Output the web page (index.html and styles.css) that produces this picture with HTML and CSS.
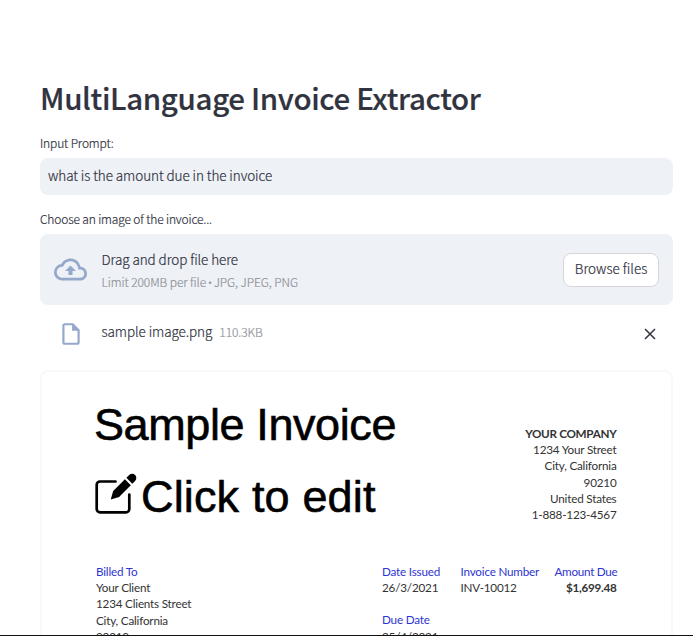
FILE: index.html
```html
<!DOCTYPE html>
<html lang="en">
<head>
<meta charset="utf-8">
<title>MultiLanguage Invoice Extractor</title>
<link rel="stylesheet" href="styles.css">
</head>
<body>
<main class="app">
  <h1 class="title"><span>MultiLanguage Invoice Extractor</span></h1>
  <label class="label label-prompt"><span>Input Prompt:</span></label>
  <div class="input"><span>what is the amount due in the invoice</span></div>
  <label class="label label-file"><span>Choose an image of the invoice...</span></label>
  <section class="dropzone">
    <svg class="cloud" viewBox="0 0 24 24"><path d="M19.35 10.04A7.49 7.49 0 0 0 12 4C9.11 4 6.6 5.64 5.35 8.04A5.994 5.994 0 0 0 0 14c0 3.31 2.69 6 6 6h13c2.76 0 5-2.24 5-5 0-2.64-2.05-4.78-4.65-4.96zM19 18H6c-2.21 0-4-1.79-4-4 0-2.05 1.53-3.76 3.56-3.97l1.07-.11.5-.95A5.469 5.469 0 0 1 12 6c2.62 0 4.88 1.86 5.39 4.43l.3 1.5 1.53.11A2.98 2.98 0 0 1 22 15c0 1.65-1.35 3-3 3zM8 13h2.55v3h2.9v-3H16l-4-4z"/></svg>
    <div class="hint">
      <span class="drag">Drag and drop file here</span>
      <span class="limit">Limit 200MB per file <span class="dot">•</span> JPG, JPEG, PNG</span>
    </div>
    <button class="browse"><span>Browse files</span></button>
  </section>
  <div class="file">
    <svg class="doc" viewBox="0 0 24 24"><path d="M14 2H6c-1.1 0-1.99.9-1.99 2L4 20c0 1.1.89 2 1.99 2H18c1.1 0 2-.9 2-2V8l-6-6zM6 20V4h7v5h5v11H6z"/></svg>
    <span class="name">sample image.png</span>
    <span class="size">110.3KB</span>
    <svg class="close" viewBox="0 0 12 12"><path d="M1 1l10 10M11 1L1 11"/></svg>
  </div>
  <article class="invoice">
    <header class="head">
      <div class="headline">
        <p class="big sample"><span>Sample Invoice</span></p>
        <p class="big edit">
          <svg class="pencil" viewBox="0 0 42 42"><path class="frame" d="M20.5 8.5H5a3.3 3.3 0 0 0-3.300 3.300V36a3.300 3.300 0 0 0 3.300 3.300H31a3.300 3.300 0 0 0 3.300-3.300V21.500"/><path d="M15.700 26.500L18.200 18 29.900 6.300l5.900 5.900L24.100 23.900z"/><path d="M31.400 4.800L34.200 2a4.100 4.100 0 0 1 5.900 5.900l-2.800 2.800z"/></svg>
          <span>Click to edit</span>
        </p>
      </div>
      <address class="company"><b>YOUR COMPANY</b><span>1234 Your Street</span><span>City, California</span><span>90210</span><span>United States</span><span>1-888-123-4567</span></address>
    </header>
    <div class="details">
      <div class="col"><em>Billed To</em><span>Your Client</span><span>1234 Clients Street</span><span>City, California</span><span>90210</span></div>
      <div class="col"><em>Date Issued</em><span>26/3/2021</span><em class="due">Due Date</em><span>25/4/2021</span></div>
      <div class="col"><em>Invoice Number</em><span>INV-10012</span></div>
      <div class="col right"><em>Amount Due</em><b>$1,699.48</b></div>
    </div>
  </article>
</main>
<div class="edge"></div>
</body>
</html>
```
FILE: styles.css
```css
* { box-sizing: border-box; }
body {
  margin: 0;
  height: 636px;
  overflow: hidden;
  background: #fff;
  color: #31333f;
  font-family: "Noto Sans CJK SC", "Noto Sans", sans-serif;
  font-weight: 300;
  letter-spacing: -.08px;
  -webkit-text-stroke: .2px currentColor;
  display: flex;
  flex-direction: column;
}
.app { flex: 1; min-height: 0; overflow: hidden; padding: 75px 20px 0 40px; }
.title { margin: 0; font-size: 29.500px; font-weight: 500; letter-spacing: -.34px; line-height: 44px; white-space: nowrap; -webkit-text-stroke: .2px #31333f; }
.label { display: block; font-size: 12px; line-height: 18px; white-space: nowrap; letter-spacing: -.15px; }
.label-prompt { margin-top: 15px; }
.input { margin-top: 6px; height: 37px; border-radius: 8px; background: #eef1f6; padding: 0 8px; font-size: 13.500px; line-height: 35px; }
.label-file { margin-top: 15px; }
.dropzone { margin-top: 6px; height: 71px; border-radius: 8px; background: #eef1f6; display: flex; align-items: center; padding: 0 14px; }
.cloud { width: 33px; height: 33px; fill: #93a8ca; stroke: none; }
.hint { display: flex; flex-direction: column; margin-left: 14.500px; flex: 1; padding-top: 2px; }
.drag { font-size: 13.500px; line-height: 22px; }
.limit { font-size: 12px; line-height: 23px; color: #92949b; }
.dot { font-family: "Noto Sans", sans-serif; margin: 0 -1px; }
.browse { width: 96px; height: 34px; padding: 0 0 3px; border: 1px solid #d5d6d9; border-radius: 8px; background: #fff; color: #31333f; font: 300 13.500px/28px "Noto Sans CJK SC", sans-serif; }
.file { height: 65px; display: flex; align-items: center; padding: 0 17px 8px 18px; }
.doc { width: 26px; height: 26px; fill: #93a8ca; }
.name { font-size: 13.500px; margin: -5px 0 0 17.500px; }
.size { font-size: 12px; color: #92949b; margin: -4px 0 0 7px; }
.close { width: 12px; height: 12px; margin-left: auto; margin-top: 1px; fill: none; stroke: #31333f; stroke-width: 1.500; }
.invoice { border: 2px solid #f9f9f9; border-radius: 8px; height: 400px; margin-top: -.500px; padding: 0 54px; font-family: Lato, sans-serif; font-weight: 400; font-size: 11.700px; letter-spacing: -.2px; line-height: 16.300px; color: #333; -webkit-text-stroke: 0; }
.head { display: flex; justify-content: space-between; padding-top: 25.500px; height: 191.200px; }
.big { margin: 0; height: 72px; line-height: 56px; font-family: "Liberation Sans", Arial, sans-serif; font-size: 45px; letter-spacing: .15px; color: #000; -webkit-text-stroke: .6px #000; white-space: nowrap; }
.edit { display: flex; }
.sample { margin-left: -2px; letter-spacing: -.4px; }
.pencil { width: 42px; height: 42px; margin: 4px 4px 0 -1px; }
.frame { fill: none; stroke: #000; stroke-width: 2.700; stroke-linecap: round; }
.company { font-style: normal; text-align: right; padding-top: 27.800px; margin-right: .500px; }
.company > *, .col > * { display: block; white-space: nowrap; }
.company b { letter-spacing: -.3px; }
.details { display: grid; grid-template-columns: 286px 78.500px 94px minmax(0, 1fr); }
.col em { font-style: normal; color: #2f35d0; }
.due { margin-top: 16px; }
.right { text-align: right; letter-spacing: -.28px; margin-right: .500px; }
.edge { height: 1px; background: #111; flex: none; }
```
